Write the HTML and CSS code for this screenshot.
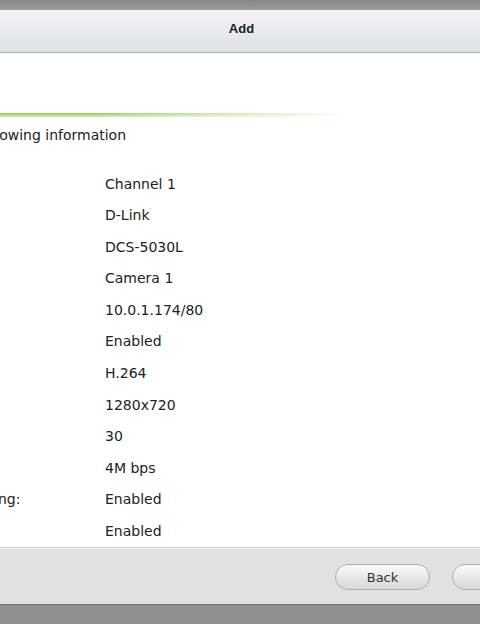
FILE: index.html
```html
<!DOCTYPE html>
<html lang="en">
<head>
    <meta charset="UTF-8">
    <meta name="viewport" content="width=device-width, initial-scale=1.0">
    <title>Add</title>
    <link rel="stylesheet" href="styles.css">
</head>
<body>
    <!-- 背景遮罩 上 -->
    <div class="mask-top"></div>

    <div class="dialog">
        <!-- 标题栏 -->
        <div class="titlebar">Add</div>

        <!-- 内容 -->
        <div class="content">
            <div class="inner">
                <div class="rule"></div>
                <p class="intro">Please confirm the following information</p>
                <dl class="info">
                    <dt>Camera No.:</dt><dd>Channel 1</dd>
                    <dt>Camera Brand:</dt><dd>D-Link</dd>
                    <dt>Camera Model:</dt><dd>DCS-5030L</dd>
                    <dt>Camera Name:</dt><dd>Camera 1</dd>
                    <dt>IP Address:</dt><dd>10.0.1.174/80</dd>
                    <dt>Recording:</dt><dd>Enabled</dd>
                    <dt>Compression:</dt><dd>H.264</dd>
                    <dt>Resolution:</dt><dd>1280x720</dd>
                    <dt>Frame Rate:</dt><dd>30</dd>
                    <dt>Bitrate:</dt><dd>4M bps</dd>
                    <dt>Enable audio recording:</dt><dd>Enabled</dd>
                    <dt>Manual recording:</dt><dd>Enabled</dd>
                </dl>
            </div>
        </div>

        <!-- 按钮栏 -->
        <div class="footer">
            <button class="btn">Back</button>
            <button class="btn">Next</button>
        </div>
    </div>

    <!-- 背景遮罩 下 -->
    <div class="mask-bottom"></div>
</body>
</html>
```

FILE: styles.css
```css
/* 清除默认样式 */
*{
    margin: 0;
    padding: 0;
    box-sizing: border-box;
}

html, body{
    height: 100%;
}

body{
    overflow: hidden;
    background-color: #8f8f8f;
    font-family: "DejaVu Sans", Verdana, sans-serif;
    font-size: 14px;
    color: #222;
}

.mask-top{
    height: 10px;
    background: linear-gradient(#868686, #9c9c9c);
}

.dialog{
    background-color: #fff;
}

/* 标题栏 */
.titlebar{
    height: 43px;
    padding: 10px 0 0 3px;
    border-top: 1px solid #f7f7f7;
    border-bottom: 1px solid #a9b1ba;
    background: linear-gradient(#f1f2f4, #dde2e8);
    text-align: center;
    font-family: "Liberation Sans", Arial, sans-serif;
    font-weight: bold;
    font-size: 13px;
    line-height: 16px;
    color: #1e1e1e;
}

/* 内容 */
.content{
    height: 494px;
    overflow: hidden;
}

.inner{
    margin-left: -157px;
    padding-top: 60px;
}

/* 绿色分隔线 */
.rule{
    width: 504px;
    height: 4px;
    background: linear-gradient(to right, rgba(255,255,255,0) 0, rgba(255,255,255,0) 50%, rgba(255,255,255,.6) 80%, #fff 100%),
                linear-gradient(#95cc52, #b7de88 50%, #d3ecb6);
}

.intro{
    margin-top: 10px;
    line-height: 16px;
}

.info{
    display: grid;
    grid-template-columns: 251px 1fr;
    grid-auto-rows: 31.6px;
    margin-top: 25.5px;
    padding-left: 11px;
    line-height: 31.6px;
}

.info dt,
.info dd{
    white-space: nowrap;
}

/* 按钮栏 */
.footer{
    display: flex;
    gap: 22px;
    height: 57px;
    padding: 16px 0 0 335px;
    border-top: 1px solid #cdcdcd;
    box-shadow: inset 0 1px 0 #fafafa;
    background-color: #e1e1e1;
}

.btn{
    flex: none;
    width: 95px;
    height: 26px;
    border: 1px solid #aeaeae;
    border-radius: 13px;
    background: linear-gradient(#fbfbfb, #e4e4e4 60%, #d9d9d9);
    font-family: "DejaVu Sans", Verdana, sans-serif;
    font-size: 13px;
    color: #333;
}

.mask-bottom{
    height: 100%;
    border-top: 1px solid #747474;
    background-color: #8f8f8f;
}
```
